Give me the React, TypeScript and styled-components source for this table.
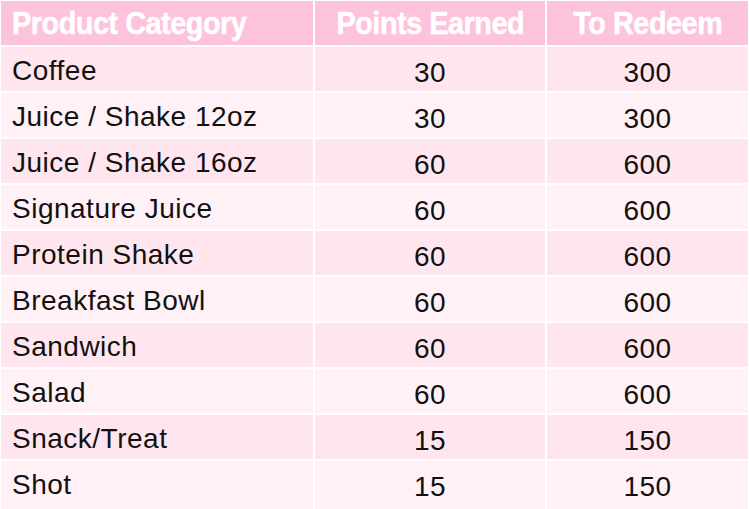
import React from 'react';
import styled, { createGlobalStyle, css } from 'styled-components';

const rows = [
  { name: 'Coffee', earned: 30, redeem: 300 },
  { name: 'Juice / Shake 12oz', earned: 30, redeem: 300 },
  { name: 'Juice / Shake 16oz', earned: 60, redeem: 600 },
  { name: 'Signature Juice', earned: 60, redeem: 600 },
  { name: 'Protein Shake', earned: 60, redeem: 600 },
  { name: 'Breakfast Bowl', earned: 60, redeem: 600 },
  { name: 'Sandwich', earned: 60, redeem: 600 },
  { name: 'Salad', earned: 60, redeem: 600 },
  { name: 'Snack/Treat', earned: 15, redeem: 150 },
  { name: 'Shot', earned: 15, redeem: 150 },
];

const App = () => {
  return (
    <>
      <GlobalStyle />
      <Table>
        <Head>
          <HeadText>Product Category</HeadText>
        </Head>
        <Head $center>
          <HeadText $center>Points Earned</HeadText>
        </Head>
        <Head $center>
          <HeadText $center>To Redeem</HeadText>
        </Head>
        {rows.map((row, i) => (
          <React.Fragment key={row.name}>
            <Cell $alt={i % 2 === 1}>{row.name}</Cell>
            <Cell $alt={i % 2 === 1} $center>
              {row.earned}
            </Cell>
            <Cell $alt={i % 2 === 1} $center>
              {row.redeem}
            </Cell>
          </React.Fragment>
        ))}
      </Table>
    </>
  );
};

const GlobalStyle = createGlobalStyle`
  html, body {
    margin: 0;
    padding: 0;
    background: #ffffff;
    overflow: hidden;
  }
`;

const Table = styled.div`
  display: grid;
  grid-template-columns: 312px 230px 201px;
  grid-template-rows: repeat(10, 44px) 52px;
  gap: 2px;
  padding: 1px;
  background-color: #ffffff;
  width: 749px;
  box-sizing: border-box;
`;

const Head = styled.div<{ $center?: boolean }>`
  display: flex;
  align-items: center;
  padding: 0 11px;
  background-color: #fec3dc;
  overflow: hidden;

  ${(props) =>
    props.$center &&
    css`
      justify-content: center;
    `}
`;

const HeadText = styled.span<{ $center?: boolean }>`
  display: inline-block;
  color: #ffffff;
  font-family: 'Liberation Sans', Arial, sans-serif;
  font-weight: 700;
  font-size: 32px;
  letter-spacing: -0.5px;
  white-space: nowrap;
  -webkit-text-stroke: 0.5px #ffffff;
  transform: scaleX(0.9);
  transform-origin: ${(props) => (props.$center ? 'center' : 'left')} center;
`;

const Cell = styled.div<{ $alt?: boolean; $center?: boolean }>`
  display: flex;
  align-items: flex-start;
  padding: 8px 11px 0;
  background-color: #ffe6ee;
  color: #111111;
  font-family: 'Liberation Sans', Arial, sans-serif;
  font-size: 28px;
  letter-spacing: 0.5px;
  white-space: nowrap;

  ${(props) =>
    props.$alt &&
    css`
      background-color: #fff1f6;
    `}
  ${(props) =>
    props.$center &&
    css`
      justify-content: center;
      padding-top: 10px;
    `}
`;

export default App;
